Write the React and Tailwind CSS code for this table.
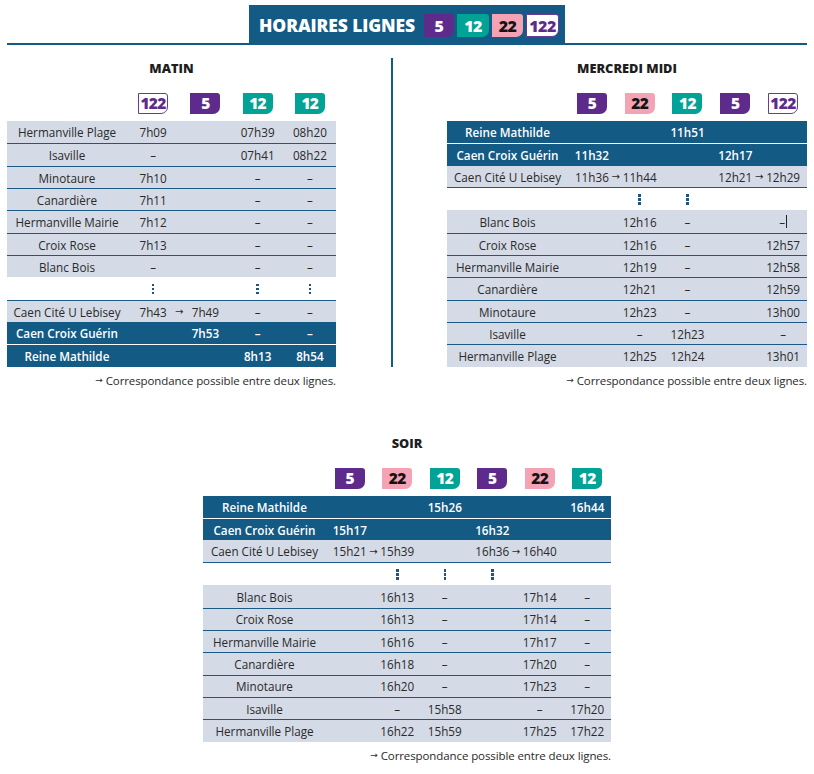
import React from 'react';

const BLUE = 'bg-[#135a84]';

const badgeStyle = {
  '5': 'bg-[#5e2b8c] text-white',
  '12': 'bg-[#00a396] text-white',
  '22': 'bg-[#f4a3b5] text-[#141414]',
  '122': 'bg-white text-[#5e2b8c] border-[1.5px] border-[#6b3a98]',
};

const Badge = ({ n, className }) => (
  <div
    className={`flex items-center justify-center rounded-tr-[3px] rounded-br-[7px] font-['Open_Sans'] font-extrabold tracking-[-0.6px] ${badgeStyle[n]} ${className}`}
  >
    {n}
  </div>
);

const Dots = () => (
  <div className="flex flex-col items-center gap-[1.5px]">
    <span className="w-[2.5px] h-[2.5px] bg-[#1c5583]" />
    <span className="w-[2.5px] h-[2.5px] bg-[#1c5583]" />
    <span className="w-[2.5px] h-[2.5px] bg-[#1c5583]" />
  </div>
);

const Arrow = ({ className }) => (
  <span className={`font-['DejaVu_Sans'] font-normal ${className}`}>→</span>
);

const Cell = ({ v }) => {
  if (v && typeof v === 'object') {
    return (
      <div className="relative flex items-center justify-center pt-[2px]">
        {v.t}
        <span className="absolute right-0 translate-x-1/2 top-0 bottom-0 flex items-center pt-[1px]">
          <Arrow className="text-[10px]" />
        </span>
      </div>
    );
  }
  if (v === '–|') {
    return (
      <div className="flex items-center justify-center pt-[2px]">
        –<span className="inline-block w-px h-[13px] bg-[#222] ml-[1px] -mt-[2px]" />
      </div>
    );
  }
  return <div className="flex items-center justify-center pt-[2px]">{v}</div>;
};

const Row = ({ row, cols }) => {
  const border =
    row.bt === 'dark'
      ? 'border-t border-[#1b5a86]'
      : row.bt === 'white'
      ? 'border-t border-white'
      : '';
  const borderB = row.bb ? 'border-b border-[#1b5a86]' : '';
  if (row.dots) {
    return (
      <div className={`grid ${cols} h-[22.35px] bg-white ${border} ${borderB}`}>
        <div />
        {row.dotsCols.map((d, i) => (
          <div key={i} className="flex items-center justify-center pt-[1px]">
            {d ? <Dots /> : null}
          </div>
        ))}
      </div>
    );
  }
  const tone = row.dark
    ? `${BLUE} text-white font-semibold`
    : 'bg-[#d4dae6] text-[#2a2a2a]';
  return (
    <div className={`grid ${cols} h-[22.35px] text-[11.7px] ${tone} ${border} ${borderB}`}>
      <div className="flex items-center justify-center whitespace-nowrap pt-[2px]">{row.n}</div>
      {row.c.map((v, i) => (
        <Cell key={i} v={v} />
      ))}
    </div>
  );
};

const Section = ({ title, badges, rows, cols, className }) => (
  <div className={className}>
    <div className="h-4 flex items-center justify-center text-[12.8px] font-extrabold text-[#1e1e1e] pt-[1px]">
      {title}
    </div>
    <div className={`grid ${cols} mt-[17px] h-[22px]`}>
      <div />
      {badges.map((b, i) => (
        <div key={i} className="flex justify-center">
          <Badge n={b} className="w-[30px] h-[21px] text-[15.5px]" />
        </div>
      ))}
    </div>
    <div className="mt-[6px]">
      {rows.map((r, i) => (
        <Row key={i} row={r} cols={cols} />
      ))}
    </div>
    <div className="mt-[7px] h-[14px] flex items-center justify-end text-[11.5px] text-[#2a2a2a] whitespace-nowrap tracking-[-0.1px]">
      <Arrow className="text-[9px] mr-[3px]" />
      Correspondance possible entre deux lignes.
    </div>
  </div>
);

const D = 'dark';

const matin = [
  { n: 'Hermanville Plage', c: ['7h09', '', '07h39', '08h20'] },
  { n: 'Isaville', bt: D, c: ['–', '', '07h41', '08h22'] },
  { n: 'Minotaure', bt: D, c: ['7h10', '', '–', '–'] },
  { n: 'Canardière', bt: D, c: ['7h11', '', '–', '–'] },
  { n: 'Hermanville Mairie', bt: D, c: ['7h12', '', '–', '–'] },
  { n: 'Croix Rose', bt: D, c: ['7h13', '', '–', '–'] },
  { n: 'Blanc Bois', bt: D, c: ['–', '', '–', '–'] },
  { dots: true, dotsCols: [1, 0, 1, 1] },
  { n: 'Caen Cité U Lebisey', bt: D, c: [{ t: '7h43' }, '7h49', '–', '–'] },
  { n: 'Caen Croix Guérin', dark: true, c: ['', '7h53', '–', '–'] },
  { n: 'Reine Mathilde', dark: true, bt: 'white', c: ['', '', '8h13', '8h54'] },
];

const mercredi = [
  { n: 'Reine Mathilde', dark: true, c: ['', '', '11h51', '', ''] },
  { n: 'Caen Croix Guérin', dark: true, bt: 'white', c: ['11h32', '', '', '12h17', ''] },
  { n: 'Caen Cité U Lebisey', bb: true, c: [{ t: '11h36' }, '11h44', '', { t: '12h21' }, '12h29'] },
  { dots: true, dotsCols: [0, 1, 1, 0, 0] },
  { n: 'Blanc Bois', c: ['', '12h16', '–', '', '–|'] },
  { n: 'Croix Rose', bt: D, c: ['', '12h16', '–', '', '12h57'] },
  { n: 'Hermanville Mairie', bt: D, c: ['', '12h19', '–', '', '12h58'] },
  { n: 'Canardière', bt: D, c: ['', '12h21', '–', '', '12h59'] },
  { n: 'Minotaure', bt: D, c: ['', '12h23', '–', '', '13h00'] },
  { n: 'Isaville', bt: D, c: ['', '–', '12h23', '', '–'] },
  { n: 'Hermanville Plage', bt: D, c: ['', '12h25', '12h24', '', '13h01'] },
];

const soir = [
  { n: 'Reine Mathilde', dark: true, c: ['', '', '15h26', '', '', '16h44'] },
  { n: 'Caen Croix Guérin', dark: true, bt: 'white', c: ['15h17', '', '', '16h32', '', ''] },
  { n: 'Caen Cité U Lebisey', bb: true, c: [{ t: '15h21' }, '15h39', '', { t: '16h36' }, '16h40', ''] },
  { dots: true, dotsCols: [0, 1, 1, 1, 0, 0] },
  { n: 'Blanc Bois', c: ['', '16h13', '–', '', '17h14', '–'] },
  { n: 'Croix Rose', bt: D, c: ['', '16h13', '–', '', '17h14', '–'] },
  { n: 'Hermanville Mairie', bt: D, c: ['', '16h16', '–', '', '17h17', '–'] },
  { n: 'Canardière', bt: D, c: ['', '16h18', '–', '', '17h20', '–'] },
  { n: 'Minotaure', bt: D, c: ['', '16h20', '–', '', '17h23', '–'] },
  { n: 'Isaville', bt: D, c: ['', '–', '15h58', '', '–', '17h20'] },
  { n: 'Hermanville Plage', bt: D, c: ['', '16h22', '15h59', '', '17h25', '17h22'] },
];

export default function App() {
  return (
    <div className="w-[814px] h-[774px] bg-white font-['Open_Sans',sans-serif] text-[#2a2a2a] overflow-hidden">
      {/* header */}
      <div className="pt-[5px] px-[7px]">
        <div className="flex justify-center">
          <div className={`w-[316px] h-[38px] ${BLUE} flex items-center pl-[10px] pr-[6px]`}>
            <span className="text-white font-extrabold text-[17.5px] tracking-[-0.1px] whitespace-nowrap pt-[3px]">
              HORAIRES LIGNES
            </span>
            <div className="flex ml-auto gap-[3px] mt-[3px]">
              <Badge n="5" className="w-[30px] h-[23px] text-[16px]" />
              <Badge n="12" className="w-[32px] h-[23px] text-[16px]" />
              <Badge n="22" className="w-[31px] h-[23px] text-[16px]" />
              <Badge n="122" className="w-[33px] h-[23px] text-[16px]" />
            </div>
          </div>
        </div>
        <div className={`h-[2px] ${BLUE}`} />
      </div>

      {/* matin / mercredi midi */}
      <div className="flex items-start">
        <Section
          title="MATIN"
          badges={['122', '5', '12', '12']}
          rows={matin}
          cols="grid-cols-[120px_repeat(4,1fr)]"
          className="ml-[7px] w-[329px] mt-[15px]"
        />
        <div className={`ml-[55px] w-[2px] h-[309px] mt-[13px] ${BLUE}`} />
        <Section
          title="MERCREDI MIDI"
          badges={['5', '22', '12', '5', '122']}
          rows={mercredi}
          cols="grid-cols-[121px_repeat(5,1fr)]"
          className="ml-[54px] w-[360px] mt-[15px]"
        />
      </div>

      {/* soir */}
      <Section
        title="SOIR"
        badges={['5', '22', '12', '5', '22', '12']}
        rows={soir}
        cols="grid-cols-[123px_repeat(6,1fr)]"
        className="ml-[203px] w-[408px] mt-[47px]"
      />
    </div>
  );
}
